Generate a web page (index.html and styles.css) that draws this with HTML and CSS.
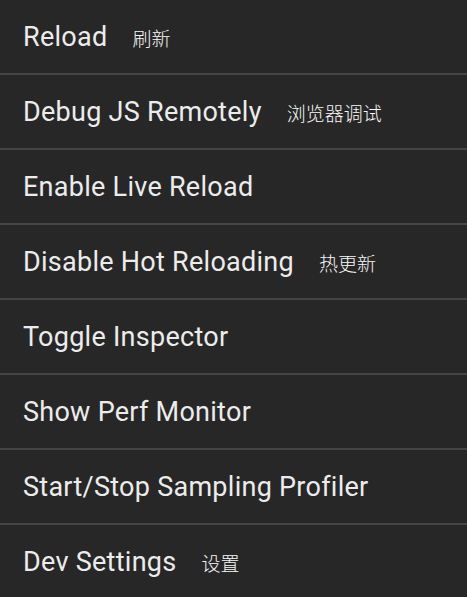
FILE: index.html
```html
<!DOCTYPE html>
<html>
<head>
<meta charset="utf-8">
<link rel="stylesheet" href="styles.css">
</head>
<body>
<ul class="menu">
  <li class="item"><span class="label">Reload</span><span class="note">刷新</span></li>
  <li class="item"><span class="label">Debug JS Remotely</span><span class="note">浏览器调试</span></li>
  <li class="item"><span class="label">Enable Live Reload</span></li>
  <li class="item"><span class="label">Disable Hot Reloading</span><span class="note">热更新</span></li>
  <li class="item"><span class="label">Toggle Inspector</span></li>
  <li class="item"><span class="label">Show Perf Monitor</span></li>
  <li class="item"><span class="label">Start/Stop Sampling Profiler</span></li>
  <li class="item"><span class="label">Dev Settings</span><span class="note">设置</span></li>
</ul>
</body>
</html>
```

FILE: styles.css
```css
html, body {
  margin: 0;
  padding: 0;
  background: #272727;
  height: 100%;
  overflow: hidden;
}
.menu {
  list-style: none;
  margin: 0;
  padding: 0;
}
.item {
  display: flex;
  align-items: center;
  box-sizing: border-box;
  height: 75px;
  padding-left: 23px;
  padding-top: 1px;
  border-bottom: 2px solid #454545;
  color: #ececec;
}
.label {
  font-family: Roboto, "Noto Sans", sans-serif;
  font-size: 27px;
  letter-spacing: 0.27px;
}
.note {
  font-family: "Noto Sans CJK SC", sans-serif;
  font-size: 19px;
  font-weight: 300;
  color: #f8f8f8;
  margin-left: 25px;
}
```
